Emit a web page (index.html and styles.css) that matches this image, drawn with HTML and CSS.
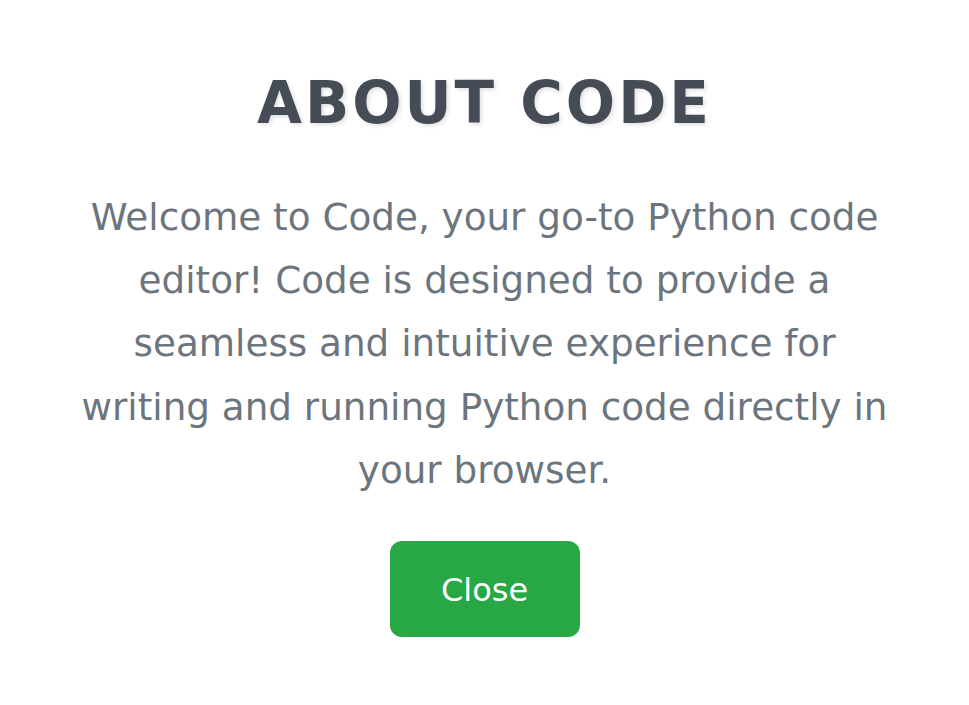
FILE: index.html
```html
<!DOCTYPE html>
<html lang="en">
<head>
  <meta charset="UTF-8" />
  <meta name="viewport" content="width=device-width, initial-scale=1.0">
  <title>About Code</title>
  <link rel="stylesheet" href="styles.css">
</head>
<body>

  <!-- About modal -->
  <div class="about">
    <h1 class="about-title">ABOUT CODE</h1>
    <p class="about-text">
      Welcome to Code, your go-to Python code editor! Code is designed to provide a seamless and intuitive experience for writing and running Python code directly in your browser.
    </p>
    <button class="close-btn">Close</button>
  </div>

</body>
</html>
```

FILE: styles.css
```css
body {
  margin: 0;
  background-color: white;
  font-family: "DejaVu Sans", sans-serif;
}

.about {
  display: flex;
  flex-direction: column;
  align-items: center;
  text-align: center;
  padding-top: 68px;
}

.about-title {
  margin: 0;
  font-size: 58px;
  font-weight: bold;
  letter-spacing: 3px;
  color: #464c55;
  text-shadow: 2px 2px 4px rgba(0, 0, 0, 0.12);
  line-height: 70px;
}

.about-text {
  width: 820px;
  margin: 48px 0 0;
  font-size: 37.3px;
  line-height: 63.2px;
  color: #6c757d;
}

.close-btn {
  margin-top: 39px;
  width: 190px;
  height: 96px;
  border: none;
  border-radius: 12px;
  background-color: #28a745;
  color: white;
  font-family: "DejaVu Sans", sans-serif;
  font-size: 32px;
  padding-top: 2px;
  cursor: pointer;
}
```
